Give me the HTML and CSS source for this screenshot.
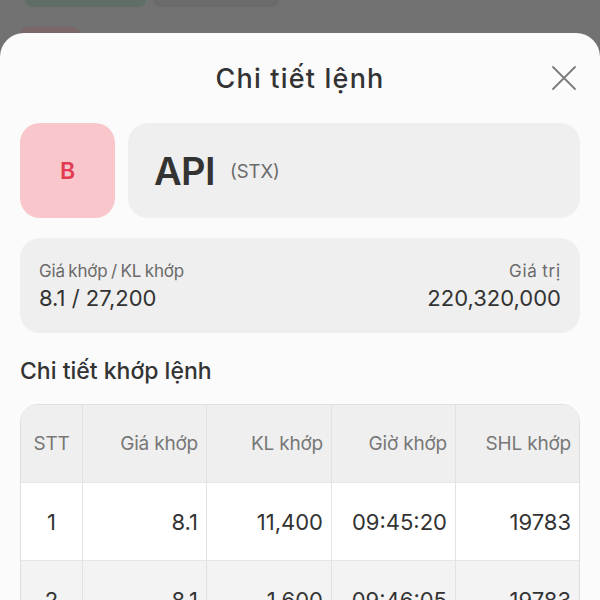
FILE: index.html
```html
<!DOCTYPE html>
<html lang="vi">
<head>
<meta charset="utf-8">
<title>Chi tiết lệnh</title>
<link rel="stylesheet" href="styles.css">
</head>
<body>
<div class="backdrop">
  <div class="bg-row">
    <div class="pill pill-green"></div>
    <div class="pill pill-gray"></div>
  </div>
  <div class="pill-red"></div>
</div>
<div class="sheet">
  <div class="sheet-head">
    <h1 class="title">Chi tiết lệnh</h1>
    <button class="close" aria-label="Đóng">
      <svg width="26" height="26" viewBox="0 0 26 26"><path d="M2 2 L24 24 M24 2 L2 24" stroke="#7a7a7a" stroke-width="1.8" stroke-linecap="round" fill="none"/></svg>
    </button>
  </div>
  <div class="cards">
    <div class="side">B</div>
    <div class="symbol"><span class="code">API</span><span class="exch">(STX)</span></div>
  </div>
  <div class="info">
    <div class="info-col">
      <div class="label">Giá khớp / KL khớp</div>
      <div class="value">8.1 / 27,200</div>
    </div>
    <div class="info-col right">
      <div class="label wide">Giá trị</div>
      <div class="value">220,320,000</div>
    </div>
  </div>
  <h2 class="section">Chi tiết khớp lệnh</h2>
  <div class="table">
    <div class="row head">
      <div class="cell c">STT</div>
      <div class="cell">Giá khớp</div>
      <div class="cell">KL khớp</div>
      <div class="cell">Giờ khớp</div>
      <div class="cell">SHL khớp</div>
    </div>
    <div class="row">
      <div class="cell c">1</div>
      <div class="cell">8.1</div>
      <div class="cell">11,400</div>
      <div class="cell">09:45:20</div>
      <div class="cell">19783</div>
    </div>
    <div class="row alt">
      <div class="cell c">2</div>
      <div class="cell">8.1</div>
      <div class="cell">1,600</div>
      <div class="cell">09:46:05</div>
      <div class="cell">19783</div>
    </div>
  </div>
</div>
</body>
</html>
```
FILE: styles.css
```css
* { box-sizing: border-box; }
html, body { margin: 0; padding: 0; }
body {
  width: 600px;
  height: 600px;
  overflow: hidden;
  background: #727272;
  font-family: Inter, "Noto Sans", sans-serif;
  color: #333;
  position: relative;
}
.backdrop { height: 40px; }
.bg-row { display: flex; gap: 7px; padding-left: 25px; }
.pill { height: 7px; border-radius: 0 0 8px 8px; }
.pill-green { width: 121px; background: #5f6f66; }
.pill-gray { width: 126px; background: #6b6b6b; }
.pill-red { margin: 20px 0 0 20px; width: 60px; height: 14px; border-radius: 8px 8px 0 0; background: #7b6767; }

.sheet {
  position: absolute;
  left: 0; top: 33px;
  width: 600px;
  height: 600px;
  background: #fbfbfb;
  border-radius: 24px 24px 0 0;
  padding: 0 20px;
}
.sheet-head {
  height: 90px;
  display: flex;
  align-items: center;
  justify-content: center;
  position: relative;
}
.title {
  margin: 0;
  font-size: 27px;
  font-weight: 500;
  color: #333;
  letter-spacing: 1.2px;
}
.close {
  position: absolute;
  right: 3px; top: 32px;
  width: 26px; height: 26px;
  padding: 0; border: 0; background: none;
  display: flex;
}
.cards { display: flex; gap: 13px; height: 95px; }
.side {
  width: 95px;
  border-radius: 20px;
  background: #f8c6cb;
  color: #e23a52;
  font-size: 23px;
  font-weight: 600;
  display: flex; align-items: center; justify-content: center;
}
.symbol {
  flex: 1;
  border-radius: 20px;
  background: #efefef;
  display: flex; align-items: center;
  padding-left: 26px;
  gap: 15px;
}
.code { font-size: 38px; font-weight: 600; color: #333; letter-spacing: -0.6px; }
.exch { font-size: 18.5px; color: #6a6a6a; }
.info {
  margin-top: 20px;
  height: 95px;
  border-radius: 20px;
  background: #efefef;
  display: flex;
  justify-content: space-between;
  align-items: center;
  padding: 0 19px;
}
.info-col.right { text-align: right; }
.label { font-size: 17px; line-height: 24px; color: #6a6a6a; letter-spacing: -0.2px; word-spacing: -1px; }
.label.wide { letter-spacing: 0.8px; }
.value { font-size: 22px; line-height: 30px; color: #333; }
.section {
  margin: 23px 0 18px;
  font-size: 23px;
  line-height: 30px;
  font-weight: 500;
  color: #333;
}
.table {
  border: 1px solid #dedede;
  border-radius: 18px;
  overflow: hidden;
  background: #fff;
}
.row {
  display: grid;
  grid-template-columns: 61px 124px 125px 124px 1fr;
  height: 78px;
  border-bottom: 1px solid #e6e6e6;
}
.row.head { background: #efefef; }
.row.alt { background: #f3f3f3; }
.cell {
  display: flex;
  align-items: center;
  justify-content: flex-end;
  padding-right: 8px;
  border-left: 1px solid #e2e2e2;
  font-size: 22px;
  color: #333;
}
.cell:first-child { border-left: 0; }
.cell.c { justify-content: center; padding-right: 0; }
.head .cell { font-size: 19px; color: #777; letter-spacing: -0.2px; }
```
